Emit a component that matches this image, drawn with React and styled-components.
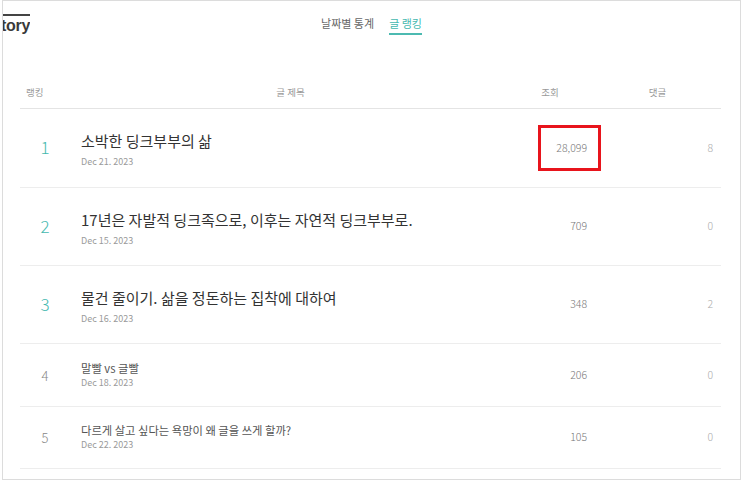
import React from "react";
import styled, { createGlobalStyle } from "styled-components";

const GlobalStyle = createGlobalStyle`
  body {
    margin: 0;
    background: #fff;
    font-family: "Noto Sans CJK KR", "Noto Sans", sans-serif;
  }
`;

const Frame = styled.div`
  box-sizing: border-box;
  width: 739px;
  height: 480px;
  margin-left: 2px;
  border: 1px solid #dcdcdc;
  overflow: hidden;
`;

const Header = styled.div`
  display: grid;
  grid-template-columns: 1fr auto 1fr;
  height: 40px;
`;

const Logo = styled.div`
  width: 27px;
  height: 40px;
  overflow: hidden;
  display: flex;
  justify-content: flex-end;
  align-items: flex-start;
`;

const LogoText = styled.span`
  margin-top: 13px;
  border-top: 2px solid #444;
  font-family: "Liberation Sans", sans-serif;
  font-size: 16px;
  font-weight: 700;
  line-height: 19px;
  color: #3a3a3a;
  letter-spacing: -0.3px;
`;

const Tabs = styled.nav`
  display: flex;
  gap: 15px;
  padding-top: 13px;
`;

const Tab = styled.span`
  font-size: 11px;
  line-height: 18px;
  color: ${(p) => (p.$active ? "#45b9af" : "#666")};
  padding-bottom: 1px;
  border-bottom: 2px solid ${(p) => (p.$active ? "#4cbab1" : "transparent")};
  height: 18px;
`;

const Table = styled.div`
  margin: 37px 19px 0 17px;
`;

const Grid = styled.div`
  display: grid;
  grid-template-columns: 61px 419px 100px 120px;
  align-items: center;
  box-sizing: border-box;
  height: ${(p) => p.$h}px;
  border-bottom: 1px solid ${(p) => (p.$head ? "#e4e4e4" : "#ededed")};
`;

const HeadCell = styled.div`
  font-size: 9.5px;
  color: #999;
  text-align: ${(p) => p.$align || "center"};
  padding-left: ${(p) => p.$pl || 0}px;
  padding-right: ${(p) => p.$pr || 0}px;
  padding-bottom: 2px;
`;

const Rank = styled.div`
  text-align: center;
  padding-right: 11px;
  padding-bottom: ${(p) => (p.$top ? 3 : 0)}px;
  font-weight: 300;
  font-size: ${(p) => (p.$top ? 17 : 13)}px;
  color: ${(p) => (p.$top ? "#45b9af" : "#888")};
`;

const TitleCell = styled.div`
  display: flex;
  flex-direction: column;
  gap: ${(p) => (p.$top ? 6 : 1)}px;
  padding-top: ${(p) => (p.$top ? 4 : 0)}px;
  padding-bottom: ${(p) => (p.$top ? 0 : 1)}px;
`;

const Title = styled.div`
  font-size: ${(p) => (p.$top ? 15 : 11.3)}px;
  line-height: ${(p) => (p.$top ? 18 : 15)}px;
  color: ${(p) => (p.$top ? "#333" : "#555")};
  white-space: nowrap;
`;

const Date = styled.div`
  font-size: 9px;
  line-height: 12px;
  color: #9a9a9a;
`;

const NumCell = styled.div`
  position: relative;
  text-align: right;
  padding-right: ${(p) => p.$pr}px;
  padding-bottom: 2px;
  font-size: 10.5px;
  font-weight: 300;
  color: ${(p) => p.$color};
`;

const Highlight = styled.span`
  position: absolute;
  left: 38px;
  top: -15px;
  width: 63px;
  height: 46px;
  box-sizing: border-box;
  border: 3px solid #e8141c;
`;

const posts = [
  { title: "소박한 딩크부부의 삶", date: "Dec 21. 2023", views: "28,099", comments: 8, mark: true },
  { title: "17년은 자발적 딩크족으로, 이후는 자연적 딩크부부로.", date: "Dec 15. 2023", views: "709", comments: 0 },
  { title: "물건 줄이기. 삶을 정돈하는 집착에 대하여", date: "Dec 16. 2023", views: "348", comments: 2 },
  { title: "말빨 vs 글빨", date: "Dec 18. 2023", views: "206", comments: 0 },
  { title: "다르게 살고 싶다는 욕망이 왜 글을 쓰게 할까?", date: "Dec 22. 2023", views: "105", comments: 0 },
];

export default function App() {
  return (
    <>
      <GlobalStyle />
      <Frame>
        <Header>
          <Logo>
            <LogoText>tory</LogoText>
          </Logo>
          <Tabs>
            <Tab>날짜별 통계</Tab>
            <Tab $active>글 랭킹</Tab>
          </Tabs>
        </Header>
        <Table>
          <Grid $head $h={31}>
            <HeadCell $align="left" $pl={6}>랭킹</HeadCell>
            <HeadCell>글 제목</HeadCell>
            <HeadCell>조회</HeadCell>
            <HeadCell $pr={5}>댓글</HeadCell>
          </Grid>
          {posts.map((p, i) => {
            const top = i < 3;
            return (
              <Grid key={i} $h={top ? (i === 0 ? 79 : 78) : i === 3 ? 63 : 62}>
                <Rank $top={top}>{i + 1}</Rank>
                <TitleCell $top={top}>
                  <Title $top={top}>{p.title}</Title>
                  <Date>{p.date}</Date>
                </TitleCell>
                <NumCell $pr={13} $color="#777">
                  {p.mark && <Highlight />}
                  {p.views}
                </NumCell>
                <NumCell $pr={7} $color="#aaa">
                  {p.comments}
                </NumCell>
              </Grid>
            );
          })}
        </Table>
      </Frame>
    </>
  );
}
